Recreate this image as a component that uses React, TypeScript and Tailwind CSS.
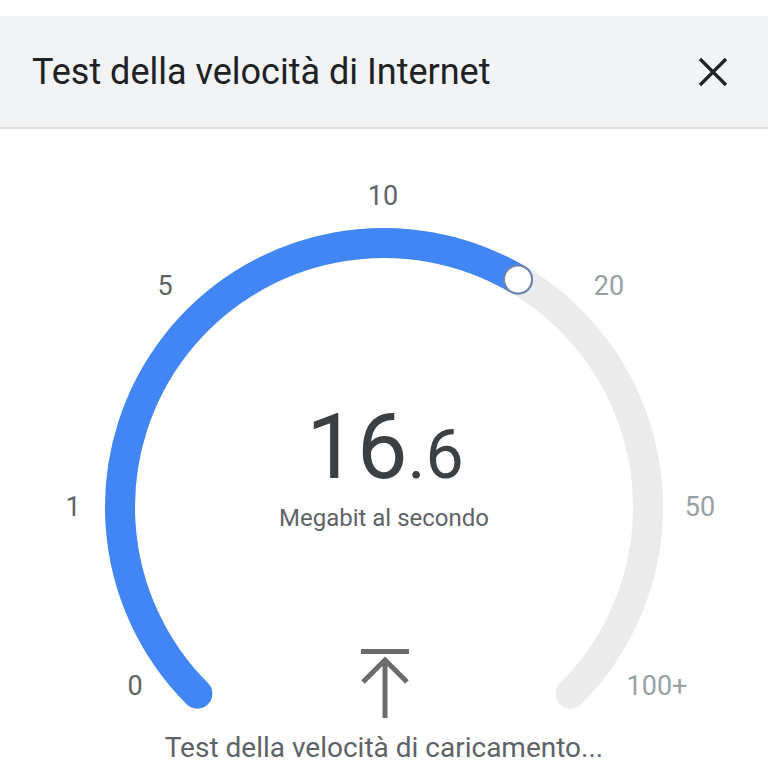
import React from 'react';

const CX = 384;
const CY = 508;
const R = 264;

const polar = (deg: number) => {
  const a = (deg * Math.PI) / 180;
  return { x: CX + R * Math.sin(a), y: CY - R * Math.cos(a) };
};

const arcPath = (from: number, to: number) => {
  const s = polar(from);
  const e = polar(to);
  const large = to - from > 180 ? 1 : 0;
  return `M ${s.x} ${s.y} A ${R} ${R} 0 ${large} 1 ${e.x} ${e.y}`;
};

const labels = [
  { t: '0', x: 135, y: 687, on: true },
  { t: '1', x: 73, y: 508, on: true },
  { t: '5', x: 165, y: 287, on: true },
  { t: '10', x: 383, y: 197, on: true },
  { t: '20', x: 609, y: 287, on: false },
  { t: '50', x: 700, y: 508, on: false },
  { t: '100+', x: 657, y: 687, on: false },
];

const App: React.FC = () => {
  const knobAngle = 30.5;
  const knob = polar(knobAngle);

  return (
    <div className="w-[768px] h-[768px] overflow-hidden bg-white pt-4" style={{ fontFamily: 'Roboto, "Noto Sans", sans-serif' }}>
      <div className="flex h-[113px] items-center justify-between border-b-2 border-[#dcdcdc] bg-[#f1f3f4] pl-[32px] pr-[40px]">
        <h1 className="text-[36px] font-normal leading-none text-[#202124]">Test della velocità di Internet</h1>
        <svg width="30" height="30" viewBox="0 0 30 30">
          <path d="M2 2 L28 28 M28 2 L2 28" stroke="#202124" strokeWidth="3.2" strokeLinecap="butt" />
        </svg>
      </div>

      <svg width="768" height="638" viewBox="0 130 768 638" className="block">
        <path d={arcPath(-135, 135)} fill="none" stroke="#ebebeb" strokeWidth="30" strokeLinecap="round" />
        <path d={arcPath(-135, knobAngle)} fill="none" stroke="#4285f4" strokeWidth="30" strokeLinecap="round" />
        <circle cx={knob.x} cy={knob.y} r="14" fill="#ffffff" stroke="#6f84a6" strokeWidth="2" />

        {labels.map((l) => (
          <text
            key={l.t}
            x={l.x}
            y={l.y}
            textAnchor="middle"
            dominantBaseline="central"
            fontSize="27"
            fill={l.on ? '#5f6368' : '#9aa0a6'}
          >
            {l.t}
          </text>
        ))}

        <text x="385" y="479" textAnchor="middle" fill="#3c4043">
          <tspan fontSize="90">16</tspan>
          <tspan fontSize="68">.6</tspan>
        </text>
        <text x="384" y="519" textAnchor="middle" dominantBaseline="central" fontSize="24" fill="#5f6368">
          Megabit al secondo
        </text>

        <path d="M361 652.5 H409 M385 661 V719 M363 683 L385 661 L407 683" fill="none" stroke="#6b6b6b" strokeWidth="5" />

        <text x="384" y="748" textAnchor="middle" dominantBaseline="central" fontSize="28" fill="#5f6368">
          Test della velocità di caricamento...
        </text>
      </svg>
    </div>
  );
};

export default App;
